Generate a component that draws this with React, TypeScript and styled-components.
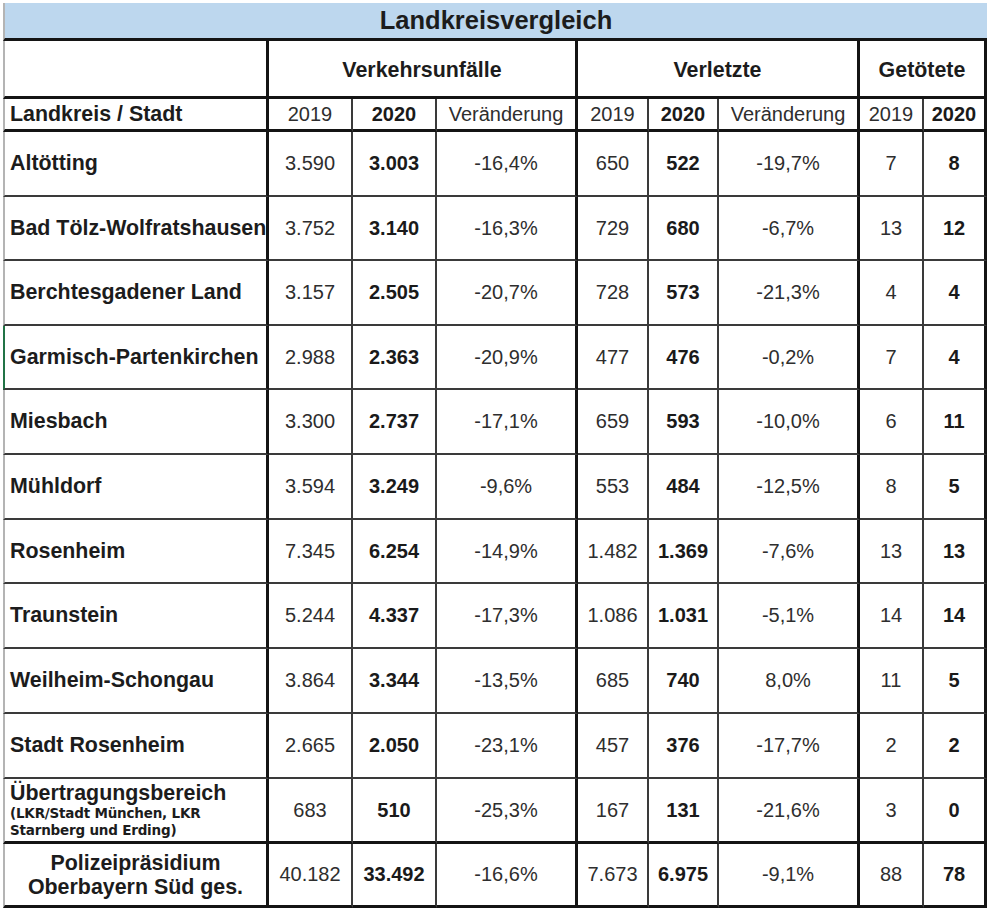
import React from 'react'
import styled, { createGlobalStyle, css } from 'styled-components'

type TRow = {
	name: string
	values: string[]
	selected?: boolean
}

const rows: TRow[] = [
	{ name: 'Altötting', values: ['3.590', '3.003', '-16,4%', '650', '522', '-19,7%', '7', '8'] },
	{ name: 'Bad Tölz-Wolfratshausen', values: ['3.752', '3.140', '-16,3%', '729', '680', '-6,7%', '13', '12'] },
	{ name: 'Berchtesgadener Land', values: ['3.157', '2.505', '-20,7%', '728', '573', '-21,3%', '4', '4'] },
	{ name: 'Garmisch-Partenkirchen', values: ['2.988', '2.363', '-20,9%', '477', '476', '-0,2%', '7', '4'], selected: true },
	{ name: 'Miesbach', values: ['3.300', '2.737', '-17,1%', '659', '593', '-10,0%', '6', '11'] },
	{ name: 'Mühldorf', values: ['3.594', '3.249', '-9,6%', '553', '484', '-12,5%', '8', '5'] },
	{ name: 'Rosenheim', values: ['7.345', '6.254', '-14,9%', '1.482', '1.369', '-7,6%', '13', '13'] },
	{ name: 'Traunstein', values: ['5.244', '4.337', '-17,3%', '1.086', '1.031', '-5,1%', '14', '14'] },
	{ name: 'Weilheim-Schongau', values: ['3.864', '3.344', '-13,5%', '685', '740', '8,0%', '11', '5'] },
	{ name: 'Stadt Rosenheim', values: ['2.665', '2.050', '-23,1%', '457', '376', '-17,7%', '2', '2'] },
]

const extra = ['683', '510', '-25,3%', '167', '131', '-21,6%', '3', '0']
const total = ['40.182', '33.492', '-16,6%', '7.673', '6.975', '-9,1%', '88', '78']

// columns where a group ends get the heavy line
const thickCols = [2, 5, 7]
const boldCols = [1, 4, 7]

type TEdge = 'thin' | 'thick'

const App = () => {
	const renderValues = (values: string[], bottom: TEdge) =>
		values.map((v, i) => (
			<NumCell
				key={i}
				$right={thickCols.includes(i) ? 'thick' : 'thin'}
				$bottom={bottom}
				$bold={boldCols.includes(i)}
			>
				{v}
			</NumCell>
		))

	return (
		<>
			<GlobalStyle />
			<Sheet>
				<Title>Landkreisvergleich</Title>
				<Grid>
					<NameCell $bottom='thick' />
					<GroupHead $span={3}>Verkehrsunfälle</GroupHead>
					<GroupHead $span={3}>Verletzte</GroupHead>
					<GroupHead $span={2}>Getötete</GroupHead>

					<NameCell $bottom='thick'>Landkreis / Stadt</NameCell>
					{renderValues(['2019', '2020', 'Veränderung', '2019', '2020', 'Veränderung', '2019', '2020'], 'thick')}

					{rows.map(row => (
						<React.Fragment key={row.name}>
							<NameCell $bottom='thin' $selected={row.selected}>
								{row.name}
							</NameCell>
							{renderValues(row.values, 'thin')}
						</React.Fragment>
					))}

					<NameCell $bottom='thick' $top>
						Übertragungsbereich
						<Note>
							(LKR/Stadt München, LKR
							<br />
							Starnberg und Erding)
						</Note>
					</NameCell>
					{renderValues(extra, 'thick')}

					<TotalCell>
						Polizeipräsidium
						<br />
						Oberbayern Süd ges.
					</TotalCell>
					{renderValues(total, 'thick')}
				</Grid>
			</Sheet>
		</>
	)
}

export default App

const GlobalStyle = createGlobalStyle`
	body {
		margin: 0;
		background: #fff;
		font-family: 'Liberation Sans', Arial, sans-serif;
		color: #1c1c1c;
	}
`
const lineFor = (edge: TEdge) => (edge === 'thick' ? '3px solid #141414' : '2px solid #3a3a3a')

const Sheet = styled.div`
	width: 984px;
	margin: 3px 0 0 3px;
`
const Title = styled.div`
	height: 38px;
	box-sizing: border-box;
	display: flex;
	align-items: center;
	justify-content: center;
	background: #bdd7ee;
	border-left: 2px solid #b4b4b4;
	border-bottom: 3px solid #141414;
	font-size: 25.5px;
	font-weight: bold;
`
const Grid = styled.div`
	display: grid;
	grid-template-columns: 266px 84px 84px 141px 71px 70px 141px 64px 63px;
	grid-template-rows: 58px 33px 65px 64px 65px 64px 65px 65px 64px 65px 65px 65px 65px 64px;
`
const Cell = styled.div<{ $bottom?: TEdge }>`
	box-sizing: border-box;
	display: flex;
	align-items: center;
	font-size: 20px;
	white-space: nowrap;
	border-bottom: ${props => lineFor(props.$bottom || 'thin')};
`
const NameCell = styled(Cell)<{ $selected?: boolean; $top?: boolean }>`
	flex-direction: column;
	align-items: flex-start;
	justify-content: center;
	padding-left: 5px;
	font-size: 21.4px;
	font-weight: bold;
	border-left: 2px solid ${props => (props.$selected ? '#217346' : '#b4b4b4')};
	border-right: 3px solid #141414;
	${props =>
		props.$top &&
		css`
			justify-content: flex-start;
			padding-top: 3px;
			line-height: 23px;
		`}
`
const Note = styled.div`
	font-family: 'DejaVu Sans', sans-serif;
	font-size: 13.5px;
	font-weight: bold;
	line-height: 17px;
	letter-spacing: -0.2px;
`
const TotalCell = styled(Cell)`
	justify-content: center;
	text-align: center;
	font-size: 21.4px;
	font-weight: bold;
	line-height: 24px;
	border-left: 2px solid #b4b4b4;
	border-right: 3px solid #141414;
	border-bottom: 3px solid #141414;
`
const GroupHead = styled(Cell)<{ $span: number }>`
	grid-column: span ${props => props.$span};
	justify-content: center;
	font-size: 21.4px;
	font-weight: bold;
	border-right: 3px solid #141414;
	border-bottom: 3px solid #141414;
	padding-top: 4px;
`
const NumCell = styled(Cell)<{ $right: TEdge; $bold?: boolean }>`
	justify-content: center;
	font-weight: ${props => (props.$bold ? 'bold' : 'normal')};
	color: ${props => (props.$bold ? '#1a1a1a' : '#2e2e2e')};
	border-right: ${props => lineFor(props.$right)};
`
